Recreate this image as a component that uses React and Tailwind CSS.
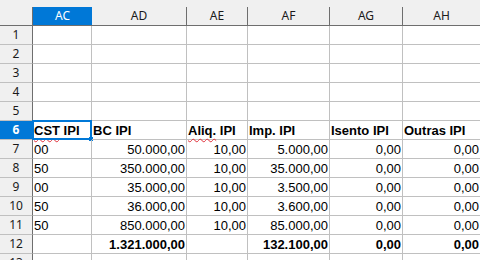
const COLS = [
  { name: "AC", w: "w-[59px]" },
  { name: "AD", w: "w-[95px]" },
  { name: "AE", w: "w-[61px]" },
  { name: "AF", w: "w-[82px]" },
  { name: "AG", w: "w-[73px]" },
  { name: "AH", w: "w-[78px]" },
];

const ROWS = [
  { n: 1, cells: [] },
  { n: 2, cells: [] },
  { n: 3, cells: [] },
  { n: 4, cells: [] },
  { n: 5, cells: [] },
  { n: 6, head: true, cells: ["CST IPI", "BC IPI", "Aliq. IPI", "Imp. IPI", "Isento IPI", "Outras IPI"] },
  { n: 7, cells: ["00", "50.000,00", "10,00", "5.000,00", "0,00", "0,00"] },
  { n: 8, cells: ["50", "350.000,00", "10,00", "35.000,00", "0,00", "0,00"] },
  { n: 9, cells: ["00", "35.000,00", "10,00", "3.500,00", "0,00", "0,00"] },
  { n: 10, cells: ["50", "36.000,00", "10,00", "3.600,00", "0,00", "0,00"] },
  { n: 11, cells: ["50", "850.000,00", "10,00", "85.000,00", "0,00", "0,00"] },
  { n: 12, bold: true, cells: ["", "1.321.000,00", "", "132.100,00", "0,00", "0,00"] },
  { n: 13, cells: [] },
];

const uiFont = { fontFamily: "'Noto Sans', 'Open Sans', sans-serif" };

function Squiggle({ children }) {
  return (
    <span className="underline decoration-wavy decoration-[#e0303a] decoration-1 underline-offset-[3px]">
      {children}
    </span>
  );
}

function HeadLabel({ text }) {
  // spell-check marks on the two words LibreOffice doesn't know
  if (text === "CST IPI") return <><Squiggle>CST</Squiggle> IPI</>;
  if (text === "Aliq. IPI") return <><Squiggle>Aliq.</Squiggle> IPI</>;
  return text;
}

export default function App() {
  return (
    <div className="w-[480px] h-[260px] overflow-hidden bg-white text-black select-none">
      {/* strip above the column headers */}
      <div className="h-[7px] bg-[#f0f0f0]" />

      {/* column headers */}
      <div className="flex h-[19px] bg-[#f0f0f0] border-b border-[#6e6e6e] text-[12px] leading-[18px] text-[#1a1a1a]" style={uiFont}>
        <div className="w-[33px] shrink-0 border-r border-[#6e6e6e]" />
        {COLS.map((c, i) => (
          <div
            key={c.name}
            className={`${c.w} shrink-0 text-center ${i === 0 ? "bg-[#0078d7] text-white" : "border-r border-[#6e6e6e]"}`}
          >
            {c.name}
          </div>
        ))}
      </div>

      {/* rows */}
      {ROWS.map((r) => (
        <div key={r.n} className="flex h-[19px]">
          <div
            className={`w-[33px] shrink-0 border-r border-r-[#6e6e6e] border-b border-b-[#c0c0c0] text-center text-[12px] leading-[18px] ${r.head ? "bg-[#0078d7] text-white font-bold" : "bg-[#f0f0f0] text-[#1a1a1a]"}`}
            style={uiFont}
          >
            {r.n}
          </div>
          {COLS.map((c, i) => {
            const v = r.cells[i] || "";
            const left = i === 0 || r.head;
            return (
              <div
                key={c.name}
                className={`${c.w} shrink-0 relative border-r border-b border-[#c0c0c0] pt-[1px] text-[13px] leading-[18px] whitespace-nowrap overflow-visible ${left ? "text-left pl-[1px]" : "text-right pr-[1px]"} ${r.head || r.bold ? "font-bold" : ""}`}
                style={{ fontFamily: "'Liberation Sans', Arial, sans-serif" }}
              >
                {r.head ? <HeadLabel text={v} /> : v}
                {r.head && i === 0 && (
                  <>
                    <div className="absolute -left-px -top-px w-[60px] h-[20px] border-2 border-[#0078d7] pointer-events-none" />
                    <div className="absolute left-[56px] top-[16px] w-[4px] h-[4px] bg-[#0078d7]" />
                  </>
                )}
              </div>
            );
          })}
        </div>
      ))}
    </div>
  );
}
